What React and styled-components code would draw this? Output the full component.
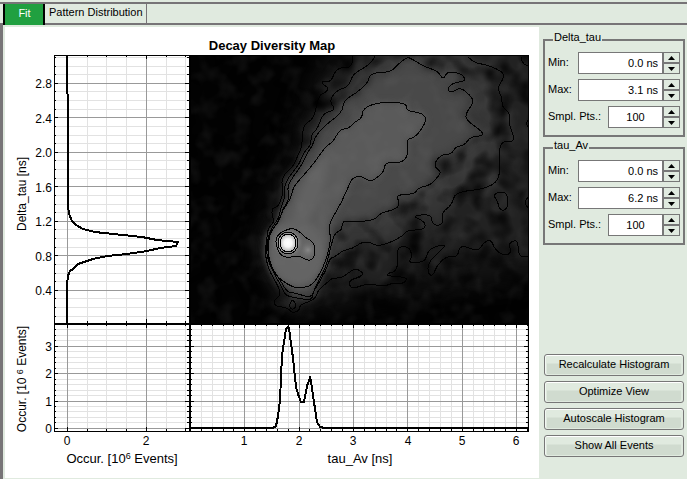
import React, { useState } from 'react';
import styled, { createGlobalStyle } from 'styled-components';

const GlobalStyle = createGlobalStyle`
  * {
    box-sizing: border-box;
  }

  body {
    margin: 0;
    background: #e0eadf;
    color: #000;
    font-family: 'Liberation Sans', Arial, sans-serif;
    font-size: 11px;
  }

  button, input {
    font-family: inherit;
    font-size: inherit;
    color: inherit;
  }
`;

const Page = styled.div`
  display: flex;
  flex-direction: column;
  min-height: 100vh;
  padding-top: 2px;
`;

const TabBar = styled.div`
  display: flex;
  height: 23px;
  padding-left: 3px;
  border-top: 2px solid #777477;
  border-bottom: 2px solid #777477;
`;

const Tab = styled.button`
  height: 21px;
  padding: 0 3px 3px 4px;
  background: ${(props) => (props.$active ? '#20a040' : '#e0eadf')};
  color: ${(props) => (props.$active ? '#fff' : '#000')};
  border: solid ${(props) => (props.$active ? '#000' : '#777477')};
  border-width: ${(props) => (props.$active ? '0 2px' : '0 1px 2px 0')};
  min-width: 42px;
`;

const Body = styled.div`
  display: flex;
  flex: 1;
  padding: 2px 0 1px 2px;
  border-left: 3px solid #777477;
`;

const ChartPanel = styled.main`
  flex: 1;
  min-width: 0;
  background: #fff;
`;

const Chart = styled.svg`
  display: block;
  width: 100%;
  height: auto;
  font-size: 13px;
`;

const Sidebar = styled.aside`
  display: flex;
  flex-direction: column;
  width: 148px;
  padding: 3px 2px 21px 4px;
`;

const Group = styled.fieldset`
  min-width: 0;
  margin: 0 0 1px;
  padding: 2px 3px 7px;
  border: 2px solid #777777;
`;

const GroupTitle = styled.legend`
  margin-left: 5px;
  padding: 0 1px 6px;
  line-height: 14px;
`;

const Field = styled.div`
  display: flex;
  align-items: center;
  justify-content: space-between;
  height: 22px;

  & + & {
    margin-top: 5px;
  }
`;

const FieldLabel = styled.label`
  padding-bottom: 3px;
  white-space: nowrap;
`;

const Spinner = styled.div`
  display: flex;
  height: 22px;
  width: ${(props) => (props.$narrow ? '72px' : '102px')};
`;

const SpinnerInput = styled.input`
  flex: 1;
  min-width: 0;
  padding: 0 4px 1px;
  border: 1px solid #777777;
  background: #fff;
  text-align: ${(props) => (props.$narrow ? 'center' : 'right')};
  outline: none;
`;

const SpinnerButtons = styled.div`
  display: flex;
  flex-direction: column;
  width: 17px;
`;

const SpinnerButton = styled.button`
  display: flex;
  flex: 1;
  align-items: center;
  justify-content: center;
  padding: 0;
  border: 1px solid #777777;
  background: #e0eadf;
`;

const Actions = styled.div`
  display: flex;
  flex-direction: column;
  gap: 5px;
  margin-top: auto;
  padding: 0 1px;
`;

const ActionButton = styled.button`
  height: 22px;
  padding: 0 0 2px;
  border: 1px solid #777777;
  border-radius: 3px;
  background: linear-gradient(#e0eadf 0 8px, #d0dbcf 9px 100%);
  box-shadow: inset 0 1px #fff, inset 1px 0 #f2f7f2, inset -2px -1px #e0eadf, inset 2px 0 #e0eadf;
`;

// pixel frame of the three linked plots
const LEFT = 54;
const SPLIT_X = 189;
const RIGHT = 528;
const TOP = 55;
const SPLIT_Y = 323;
const BOTTOM = 431;

const makeTicks = (origin, step, every, from, to, min, max) => {
  const ticks = [];
  for (let i = from; i <= to; i++) {
    const pos = Math.floor(origin + i * step);
    if (pos > min && pos < max) {
      ticks.push({ pos, major: i % every === 0 });
    }
  }
  return ticks;
};

const occurX = makeTicks(67.4, 19.75, 4, 0, 6, LEFT, SPLIT_X);
const tauX = makeTicks(190.4, 10.87, 5, 1, 31, SPLIT_X, RIGHT);
const deltaY = makeTicks(324.8, -8.625, 4, 1, 31, TOP, SPLIT_Y);
const occurY = makeTicks(428.4, -5.48, 5, 0, 18, SPLIT_Y + 1, BOTTOM);

const contourA = '353,55 353,62 349,68 342,67 335,71 331,82 322,81 322,84 329,88 325,93 319,95 315,113 312,120 303,125 302,147 298,155 293,167 285,173 282,180 282,185 283,195 278,207 272,208 272,217 275,221 268,228 267,238 265,253 268,268 273,277 280,290 280,296 274,300 275,306 282,307 288,308 292,313 299,311 300,305 308,302 316,298 318,290 328,282 332,278 342,278 352,270 358,269 364,274 357,278 350,280 349,285 353,289 368,283 383,287 392,283 402,284 407,280 405,277 387,276 388,273 395,272 398,265 397,249 402,246 410,248 412,257 408,263 425,262 427,253 433,247 447,244 438,253 428,263 428,274 433,276 437,265 447,256 458,257 460,244 478,252 483,243 491,239 495,250 505,256 512,252 508,244 515,240 518,243 519,257 528,256';
const contourB = '375,56 372,63 355,73 352,77 348,87 337,90 329,101 336,110 323,113 318,128 311,135 311,145 303,153 300,163 292,173 287,180 284,188 285,198 280,210 279,218 270,230 267,245 270,267 282,287 285,295 292,297 302,299 312,300 313,292 322,278 328,265 330,258 335,257 343,250 352,249 362,242 370,242 379,247 402,237 407,230 423,230 426,225 422,220 412,216 431,214 432,223 437,226 444,223 441,213 452,205 455,192 485,189 500,180 499,155 501,141 516,142 509,125 510,113 502,107 502,97 497,88 504,78 503,72 488,65 475,63 468,57';
const contourC = '355,94 368,83 370,73 391,72 396,66 407,57 412,59 425,67 438,71 443,80 447,72 455,72 463,75 466,81 452,83 447,90 452,93 460,87 470,95 474,102 466,113 466,120 483,132 482,136 470,137 465,145 455,147 452,154 440,155 433,166 442,172 435,180 430,185 418,188 415,194 395,195 400,202 397,209 380,213 375,220 355,222 345,221 342,223 342,230 335,233 332,242 327,263 322,275 315,287 313,295 308,297 295,293 287,292 282,283 270,265 268,248 270,232 280,220 282,210 290,198 287,188 292,178 302,165 307,153 313,145 315,137 325,125 342,113 344,100';
const contourD = '363,108 380,102 407,103 406,111 423,113 427,121 415,138 406,139 409,152 403,163 385,162 384,172 375,179 370,182 362,176 355,177 351,180 342,202 328,225 331,238 328,253 323,268 313,285 302,288 292,287 278,278 270,266 266,252 268,235 279,221 283,209 291,199 293,187 303,176 315,162 325,147 333,142 340,129 348,129 356,121 362,118';
const contourPeak = '293,228 286,230 280,233 276,238 276,245 280,255 288,258 298,255 308,261 313,259 315,253 315,246 312,241 306,238 300,232';

const smallContours = [
  '494,196 498,202 499,209 505,211 508,205 507,192 497,192 494,196',
  '293,300 297,305 293,310 289,307 291,301 293,300',
  '521,57 522,63 528,66',
  '528,197 524,202 528,208',
  '528,120 526,123 528,127',
  '355,269 361,271 363,275 358,278 355,278',
];

const deltaCurve = '67,56 67,93 68,95 68,205 69,214 72,221 76,225 83,229 95,232 113,234 142,237 157,240 178,242 176,246 160,248 147,251 127,254 107,256 93,259 78,264 73,269 70,271 68,276 67,284 67,323';
const tauCurve = '190,428 273,428 276,426 278,416 280,400 282,355 286,329 288,327 289,328 290,336 293,358 296,387 299,397 301,402 304,402 307,386 310,378 311,381 314,402 317,422 320,427 325,428 528,428';

// rounds the corners of a point list by curving through the segment midpoints
const smoothPath = (points, closed) => {
  const list = points.split(' ').map((p) => p.split(',').map(Number));
  const mid = (a, b) => `${(a[0] + b[0]) / 2} ${(a[1] + b[1]) / 2}`;
  const last = list.length - 1;
  let d = closed ? `M${mid(list[last], list[0])}` : `M${list[0].join(' ')}`;
  for (let i = closed ? 0 : 1; i < last; i++) {
    d += `Q${list[i].join(' ')} ${mid(list[i], list[i + 1])}`;
  }
  if (closed) {
    return `${d}Q${list[last].join(' ')} ${mid(list[last], list[0])}Z`;
  }
  return `${d}L${list[last].join(' ')}`;
};

function Grid({ xs, ys, x1, x2, y1, y2 }) {
  const lines = [
    ...xs.map((t) => ({ ...t, d: `M${t.pos + 0.5} ${y1}V${y2}` })),
    ...ys.map((t) => ({ ...t, d: `M${x1} ${t.pos + 0.5}H${x2}` })),
  ].sort((a, b) => a.major - b.major);
  return lines.map((line) => (
    <path key={line.d} d={line.d} stroke={line.major ? '#999' : '#e2e2e2'} />
  ));
}

function TickMarks({ xs, ys, x1, x2, y1, y2 }) {
  return (
    <g stroke="#000">
      {xs.map(({ pos, major }) => (
        <path key={pos} d={`M${pos + 0.5} ${y1}v${major ? 4 : 2}M${pos + 0.5} ${y2}v${major ? -4 : -2}`} />
      ))}
      {ys.map(({ pos, major }) => (
        <path key={pos} d={`M${x1} ${pos + 0.5}h${major ? 4 : 2}M${x2} ${pos + 0.5}h${major ? -4 : -2}`} />
      ))}
    </g>
  );
}

function DensityMap() {
  return (
    <g clipPath="url(#mapArea)">
      <rect x="189" y="55" width="340" height="269" fill="#020202" />
      <g filter="url(#haze)">
        <polygon points="350,30 315,80 285,170 262,220 256,260 275,300 300,312 400,295 560,275 560,30" fill="#141414" />
      </g>
      <g filter="url(#soft)">
        <polygon points={`${contourA} 545,256 545,40 353,40`} fill="#222" />
        <polygon points={`468,40 ${contourB.split(' ').reverse().join(' ')} 375,40`} fill="#353535" />
      </g>
      <rect x="189" y="55" width="340" height="269" filter="url(#darkNoise)" />
      <g filter="url(#soft)">
        <polygon points={contourC} fill="#494949" />
      </g>
      <g filter="url(#softer)">
        <polygon points={contourD} fill="#5a5a5a" />
        <ellipse cx="297" cy="253" rx="28" ry="33" fill="#646464" />
        <ellipse cx="310" cy="195" rx="10" ry="40" transform="rotate(22 310 195)" fill="#626262" />
      </g>
      <rect x="189" y="55" width="340" height="269" filter="url(#lightNoise)" />
      <circle cx="308" cy="250" r="10" fill="url(#sideGlow)" />
      <circle cx="288" cy="243" r="16" fill="url(#peakGlow)" />
      <g fill="none" stroke="#000" shapeRendering="crispEdges">
        <path d={smoothPath(contourA)} />
        <path d={smoothPath(contourB)} />
        <path d={smoothPath(contourC, true)} />
        <path d={smoothPath(contourD, true)} />
        <path d={smoothPath(contourPeak, true)} />
        <ellipse cx="288" cy="243" rx="10" ry="11" />
        <ellipse cx="288" cy="243" rx="8" ry="9" />
        {smallContours.map((points) => (
          <path key={points} d={smoothPath(points)} />
        ))}
      </g>
    </g>
  );
}

function DecayChart() {
  return (
    <Chart viewBox="5 27 534 451" role="img" aria-label="Decay Diversity Map">
      <defs>
        <clipPath id="mapArea">
          <rect x="189" y="55" width="340" height="269" />
        </clipPath>
        <filter id="haze" colorInterpolationFilters="sRGB">
          <feGaussianBlur stdDeviation="12" />
        </filter>
        <filter id="soft" colorInterpolationFilters="sRGB">
          <feGaussianBlur stdDeviation="5" />
        </filter>
        <filter id="softer" colorInterpolationFilters="sRGB">
          <feGaussianBlur stdDeviation="3" />
        </filter>
        <filter id="darkNoise" x="0" y="0" width="1" height="1" colorInterpolationFilters="sRGB">
          <feTurbulence type="fractalNoise" baseFrequency="0.045" numOctaves="2" seed="4" />
          <feColorMatrix values="0 0 0 0 0  0 0 0 0 0  0 0 0 0 0  2.2 0 0 0 -0.95" />
        </filter>
        <filter id="lightNoise" x="0" y="0" width="1" height="1" colorInterpolationFilters="sRGB">
          <feTurbulence type="fractalNoise" baseFrequency="0.06" numOctaves="2" seed="9" />
          <feColorMatrix values="0 0 0 0 0.5  0 0 0 0 0.5  0 0 0 0 0.5  0.3 0 0 0 -0.14" />
        </filter>
        <radialGradient id="peakGlow">
          <stop offset="0" stopColor="#fff" />
          <stop offset="0.25" stopColor="#f6f6f6" />
          <stop offset="0.5" stopColor="#bcbcbc" />
          <stop offset="0.7" stopColor="#808080" stopOpacity="0.7" />
          <stop offset="1" stopColor="#666" stopOpacity="0" />
        </radialGradient>
        <radialGradient id="sideGlow">
          <stop offset="0" stopColor="#888" />
          <stop offset="1" stopColor="#666" stopOpacity="0" />
        </radialGradient>
      </defs>

      <g shapeRendering="crispEdges">
        <Grid xs={occurX} ys={deltaY} x1={LEFT} x2={SPLIT_X} y1={TOP} y2={SPLIT_Y} />
        <Grid xs={occurX} ys={occurY} x1={LEFT} x2={SPLIT_X} y1={SPLIT_Y} y2={BOTTOM} />
        <Grid xs={tauX} ys={occurY} x1={SPLIT_X} x2={RIGHT} y1={SPLIT_Y} y2={BOTTOM} />
      </g>

      <DensityMap />

      <g shapeRendering="crispEdges" fill="none">
        <TickMarks xs={occurX} ys={deltaY} x1={LEFT} x2={SPLIT_X} y1={TOP} y2={SPLIT_Y} />
        <TickMarks xs={occurX} ys={occurY} x1={LEFT} x2={SPLIT_X} y1={SPLIT_Y + 1} y2={BOTTOM} />
        <TickMarks xs={tauX} ys={occurY} x1={SPLIT_X + 1} x2={RIGHT} y1={SPLIT_Y + 1} y2={BOTTOM} />
        <rect x="54.5" y="55.5" width="474" height="376" stroke="#000" />
        <path d="M54 324H529M190 55V432" stroke="#000" strokeWidth="2" />
        <polyline points={deltaCurve} stroke="#000" strokeWidth="2" />
        <polyline points={tauCurve} stroke="#000" strokeWidth="2" />
      </g>

      <text x="272" y="50" textAnchor="middle" fontWeight="bold">Decay Diversity Map</text>
      <g textAnchor="end" fontSize="12">
        {['0.4', '0.8', '1.2', '1.6', '2.0', '2.4', '2.8'].map((label, i) => (
          <text key={label} x="52" y={Math.round(295 - i * 34.5)}>{label}</text>
        ))}
        {[0, 1, 2, 3].map((label) => (
          <text key={label} x="52" y={Math.round(433 - label * 27.4)}>{label}</text>
        ))}
      </g>
      <g textAnchor="middle">
        <g fontSize="12">
          <text x="67" y="445">0</text>
          <text x="146" y="445">2</text>
          {[1, 2, 3, 4, 5, 6].map((label) => (
            <text key={label} x={Math.round(190 + label * 54.4)} y="445">{label}</text>
          ))}
        </g>
        <text x="122" y="463">
          Occur. [10<tspan dy="-4" fontSize="9">6</tspan><tspan dy="4"> Events]</tspan>
        </text>
        <text x="360" y="463">tau_Av [ns]</text>
        <text transform="translate(26 194) rotate(-90)" fontSize="12">Delta_tau [ns]</text>
        <text transform="translate(26 379) rotate(-90)" fontSize="12">
          Occur. [10 <tspan dy="-3" fontSize="9">6</tspan><tspan dy="3"> Events]</tspan>
        </text>
      </g>
    </Chart>
  );
}

function NumberField({ id, label, initial, unit = '', step, narrow }) {
  const format = (n) => (unit ? `${n.toFixed(1)} ${unit}` : String(n));
  const [text, setText] = useState(format(initial));

  const change = (amount) => {
    const value = parseFloat(text) || 0;
    setText(format(Math.max(0, value + amount)));
  };

  return (
    <Field>
      <FieldLabel htmlFor={id}>{label}</FieldLabel>
      <Spinner $narrow={narrow}>
        <SpinnerInput
          id={id}
          type="text"
          $narrow={narrow}
          value={text}
          onChange={(e) => setText(e.target.value)}
        />
        <SpinnerButtons>
          <SpinnerButton type="button" aria-label={`Increase ${label}`} onClick={() => change(step)}>
            <svg width="7" height="4" viewBox="0 0 7 4"><path d="M0 4L3.5 0L7 4Z" /></svg>
          </SpinnerButton>
          <SpinnerButton type="button" aria-label={`Decrease ${label}`} onClick={() => change(-step)}>
            <svg width="7" height="4" viewBox="0 0 7 4"><path d="M0 0L3.5 4L7 0Z" /></svg>
          </SpinnerButton>
        </SpinnerButtons>
      </Spinner>
    </Field>
  );
}

function RangeGroup({ name, max }) {
  return (
    <Group>
      <GroupTitle>{name}</GroupTitle>
      <NumberField id={`${name}-min`} label="Min:" initial={0} unit="ns" step={0.1} />
      <NumberField id={`${name}-max`} label="Max:" initial={max} unit="ns" step={0.1} />
      <NumberField id={`${name}-points`} label="Smpl. Pts.:" initial={100} step={1} narrow />
    </Group>
  );
}

const tabs = ['Fit', 'Pattern Distribution'];
const actions = ['Recalculate Histogram', 'Optimize View', 'Autoscale Histogram', 'Show All Events'];

const App = () => {
  const [activeTab, setActiveTab] = useState('Fit');

  return (
    <Page>
      <GlobalStyle />
      <TabBar role="tablist">
        {tabs.map((tab) => (
          <Tab
            key={tab}
            type="button"
            role="tab"
            aria-selected={tab === activeTab}
            $active={tab === activeTab}
            onClick={() => setActiveTab(tab)}
          >
            {tab}
          </Tab>
        ))}
      </TabBar>
      <Body>
        <ChartPanel>
          <DecayChart />
        </ChartPanel>
        <Sidebar>
          <RangeGroup name="Delta_tau" max={3.1} />
          <RangeGroup name="tau_Av" max={6.2} />
          <Actions>
            {actions.map((action) => (
              <ActionButton key={action} type="button">{action}</ActionButton>
            ))}
          </Actions>
        </Sidebar>
      </Body>
    </Page>
  );
};

export default App;
